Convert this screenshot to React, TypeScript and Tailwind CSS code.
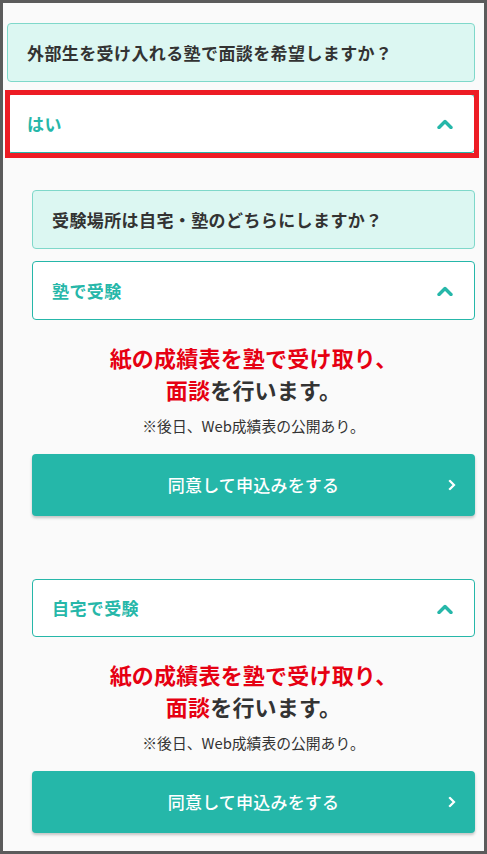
const font = {
  fontFamily: '"Noto Sans CJK JP", "Noto Sans", sans-serif',
};

const ChevronUp = () => (
  <svg width="16" height="11" viewBox="0 0 16 11" fill="none">
    <polyline
      points="2,9.5 8,3.5 14,9.5"
      stroke="#26b7a9"
      strokeWidth="3.4"
      strokeLinecap="round"
      strokeLinejoin="round"
    />
  </svg>
);

const ChevronRight = () => (
  <svg width="9" height="11" viewBox="0 0 9 11" fill="none">
    <polyline
      points="2,1.5 6,5.5 2,9.5"
      stroke="#ffffff"
      strokeWidth="2.2"
      strokeLinecap="square"
    />
  </svg>
);

const Question = ({ text }: { text: string }) => (
  <div className="flex h-[59px] items-center rounded-[4px] border border-[#7fd8ca] bg-[#dcf7f2] px-[19px]">
    <p className="text-[17px] font-bold tracking-[0.4px] text-[#333333]">{text}</p>
  </div>
);

const Answer = ({ label, highlight = false, tall = true }: { label: string; highlight?: boolean; tall?: boolean }) => (
  <div
    className={`relative flex items-center justify-between rounded-[4px] border border-[#26b7a9] bg-white pl-[19px] pr-[21px] ${
      tall ? "h-[59px]" : "h-[58px]"
    }`}
  >
    <span className="text-[17px] font-bold tracking-[0.4px] text-[#26b7a9]">{label}</span>
    <ChevronUp />
    {highlight && (
      <div className="pointer-events-none absolute -top-[5px] -bottom-[6px] -left-[3px] -right-[5px] border-[5px] border-[#ed1c24]" />
    )}
  </div>
);

const Result = () => (
  <>
    <p className="mt-[21px] text-center text-[22px] font-bold leading-[32px] tracking-[0.2px] text-[#e60012]">
      紙の成績表を塾で受け取り、
      <br />
      面談<span className="text-[#333333]">を行います。</span>
    </p>
    <p className="mt-[11px] text-center text-[14.8px] leading-[20px] text-[#333333]">
      ※後日、Web成績表の公開あり。
    </p>
    <button className="relative mt-[18px] flex h-[62px] w-full items-center justify-center rounded-[4px] bg-[#25b7a9] shadow-[0_2px_3px_rgba(0,0,0,0.22)]">
      <span className="text-[17px] font-medium tracking-[0.2px] text-white">同意して申込みをする</span>
      <span className="absolute right-[18px] top-1/2 -translate-y-1/2">
        <ChevronRight />
      </span>
    </button>
  </>
);

export default function App() {
  return (
    <div
      className="box-border h-[854px] w-full overflow-hidden border-[3px] border-[#5b5b5b] bg-[#fafafa] pl-[4px] pr-[9px] pt-[20px]"
      style={font}
    >
      <Question text="外部生を受け入れる塾で面談を希望しますか？" />
      <div className="mt-[12px]">
        <Answer label="はい" highlight />
      </div>

      <div className="mt-[37px] pl-[25px]">
        <Question text="受験場所は自宅・塾のどちらにしますか？" />
        <div className="mt-[12px]">
          <Answer label="塾で受験" />
        </div>
        <Result />

        <div className="mt-[63px]">
          <Answer label="自宅で受験" tall={false} />
        </div>
        <Result />
      </div>
    </div>
  );
}
